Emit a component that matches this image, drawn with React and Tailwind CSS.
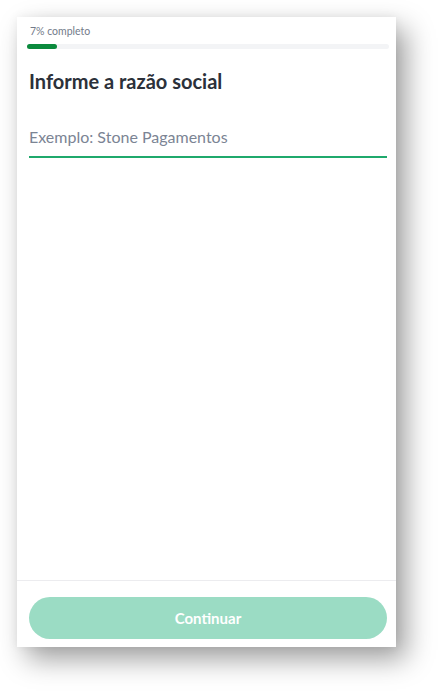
import React from 'react';

const App = () => {
    return (
        <div className="w-[444px] h-[696px] bg-white pt-[17px] pl-[17px]" style={{ fontFamily: 'Lato, "Noto Sans", sans-serif' }}>
            <div className="w-[379px] h-[630px] bg-white flex flex-col shadow-[10px_12px_26px_rgba(0,0,0,0.38),0_0_10px_rgba(0,0,0,0.06)]">
                {/* header with progress */}
                <div className="pl-[10px] pr-[7px] pt-[7px]">
                    <p className="pl-[3px] text-[10.5px] leading-[14px] text-[#737b8a]">7% completo</p>
                    <div className="mt-[6px] h-[5px] w-full rounded-full bg-[#f3f4f6]">
                        <div className="h-[5px] w-[30px] rounded-full bg-[#0b8a3d]" />
                    </div>
                </div>

                {/* content */}
                <div className="flex-1 pl-[12px] pr-[9px]">
                    <h1 className="mt-[20px] text-[20px] leading-[24px] font-bold text-[#2c313a]">
                        Informe a razão social
                    </h1>
                    <input
                        type="text"
                        placeholder="Exemplo: Stone Pagamentos"
                        className="mt-[27px] w-full h-[38px] pb-[3px] border-b-2 border-[#1fa96c] bg-transparent text-[16px] text-[#2c313a] placeholder:text-[#7b8494] outline-none"
                    />
                </div>

                {/* footer */}
                <div className="border-t border-[#ececef] pl-[12px] pr-[9px] pt-[16px] pb-[8px]">
                    <button
                        type="button"
                        disabled
                        className="w-full h-[42px] rounded-full bg-[#9bdcc4] text-white text-[15px] font-bold"
                    >
                        Continuar
                    </button>
                </div>
            </div>
        </div>
    );
};

export default App;
